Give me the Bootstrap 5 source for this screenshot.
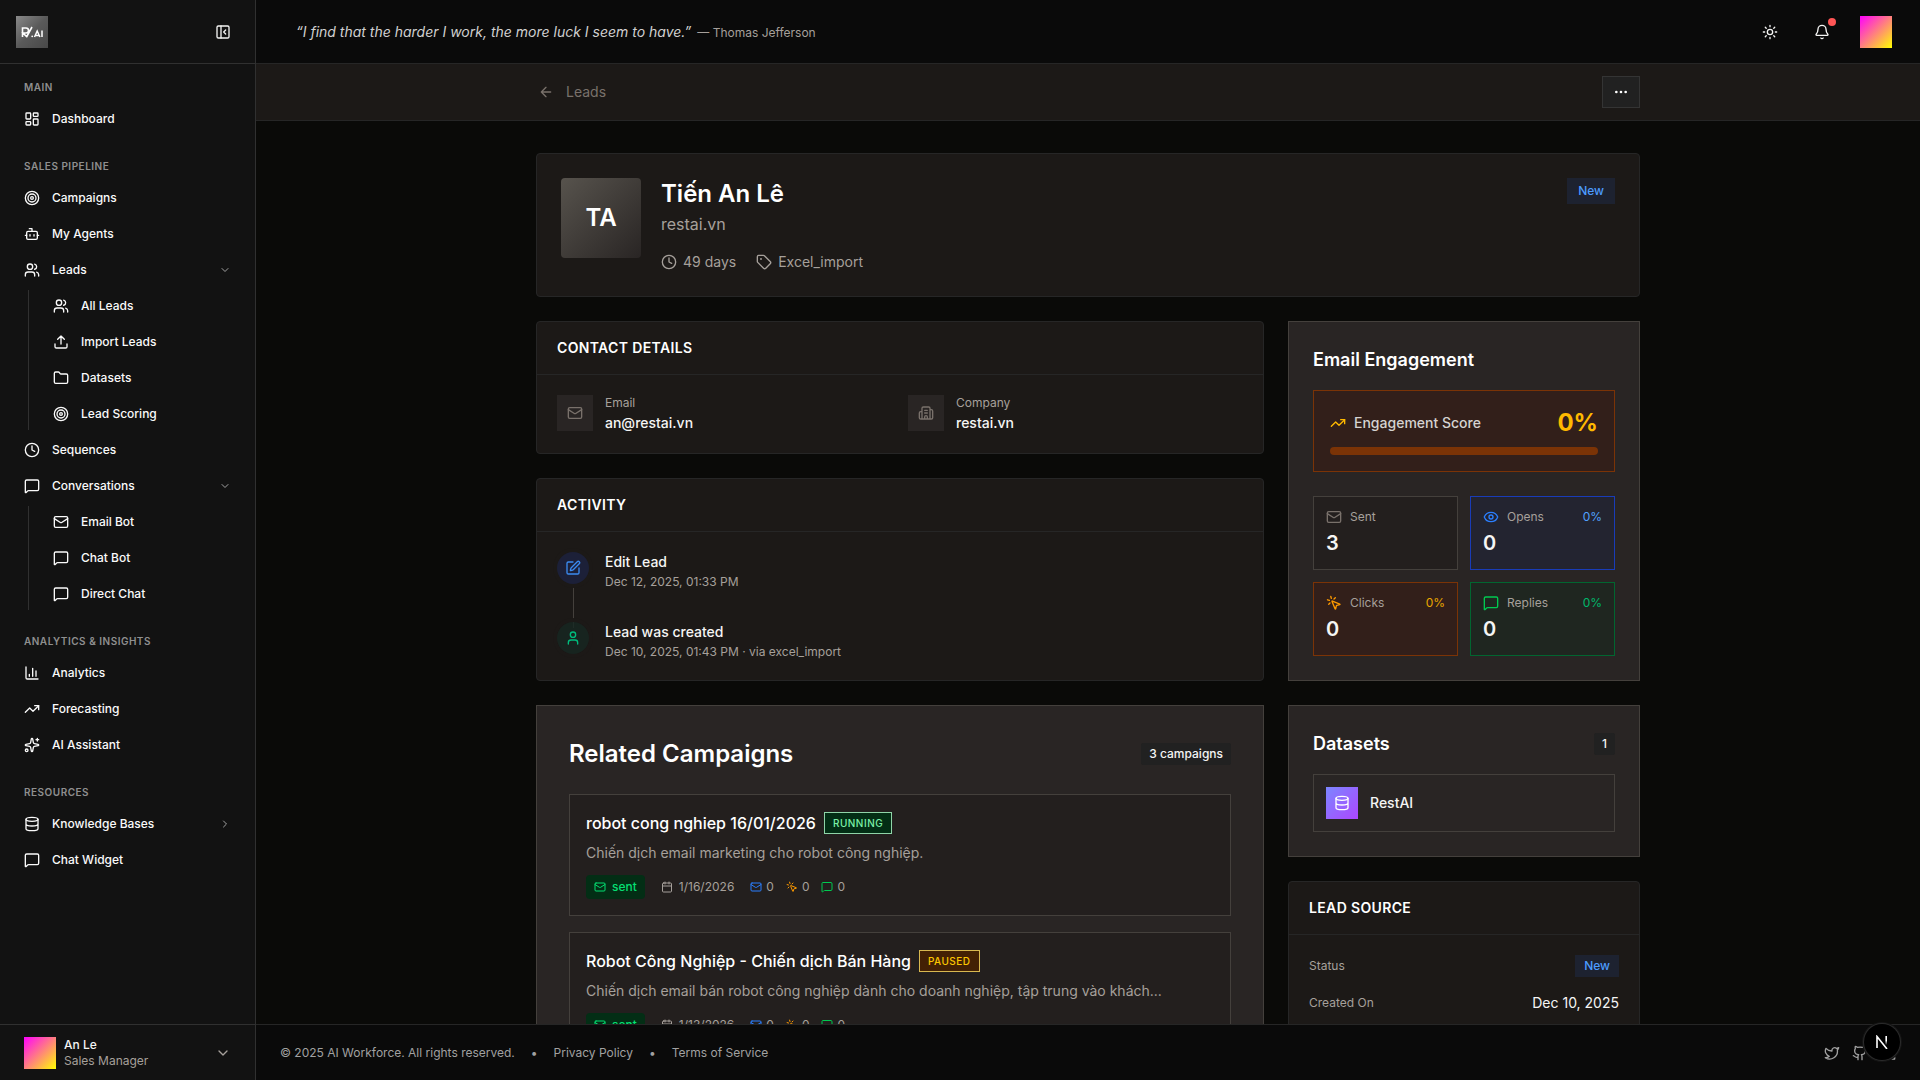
<!DOCTYPE html>
<html lang="en" data-bs-theme="dark">
<head>
<meta charset="utf-8">
<meta name="viewport" content="width=device-width, initial-scale=1">
<title>Tiến An Lê · Leads</title>
<link href="https://cdn.jsdelivr.net/npm/bootstrap@5.3.0/dist/css/bootstrap.min.css" rel="stylesheet">
<style>
:root{--edge:#262626;--s9:#1c1917;--s8:#292524;--s7:#44403c;--soft:#a6a09b;--dim:#79716b;--ink:#f5f5f4}
body{font-family:Inter,"Noto Sans",sans-serif;font-size:14px;line-height:20px;background:#0a0a08;color:var(--ink);height:100vh;overflow:hidden}
h1,h2,h3,p,ul,ol,dl,dd,dt{margin:0;padding:0}
ul,ol{list-style:none}
a{color:inherit;text-decoration:none}
button{background:none;border:0;color:inherit;padding:0;font:inherit}
.ico{width:16px;height:16px;flex:none;fill:none;stroke:currentColor;stroke-width:2;stroke-linecap:round;stroke-linejoin:round;display:block}
.ico-12{width:12px;height:12px}
.t12{font-size:12px;line-height:16px}
.t16{font-size:16px;line-height:24px}
.t18{font-size:18px;line-height:28px}
.t20{font-size:20px;line-height:28px}
.t24{font-size:24px;line-height:32px}
.med{font-weight:500}
.muted{color:var(--soft)}
.dim{color:var(--dim)}
.gap-2px{gap:2px}
.gap-6{gap:6px}
.gap-12{gap:12px}
.gap-20{gap:20px}
.grad{width:32px;height:32px;background:linear-gradient(135deg,#f0f,#ff0);flex:none}
/* sidebar */
.side{width:256px;flex:none;background:#121212;border-right:1px solid #303030}
.side-top{height:64px;flex:none;border-bottom:1px solid #303030;padding:0 24px 0 16px}
.brand{width:32px;height:32px;display:block}
.side-nav{padding:8px 16px;overflow:hidden}
.side-nav section+section{margin-top:16px}
.side-nav h2{font-size:10px;line-height:31px;font-weight:600;letter-spacing:.5px;color:#8f8f8f;padding-left:8px}
.side-list{display:flex;flex-direction:column;gap:4px}
.side-link{display:flex;align-items:center;gap:12px;width:100%;height:32px;padding:0 8px;font-size:12px;font-weight:500;color:#fafafa;text-align:left}
.side-link .end{margin-left:auto;color:#a1a1a1}
.side-sub{margin:4px 0 0 12px;border-left:1px solid #303030;padding-left:16px}
.side-foot{height:56px;flex:none;border-top:1px solid #303030;padding:0 24px;width:100%;text-align:left}
/* top bars */
.column{min-width:0}
.topbar{height:64px;flex:none;background:#0a0a0a;border-bottom:1px solid var(--edge);padding:0 28px 0 40px}
.quote{color:#d0d0d0}
.tool{width:36px;height:36px;display:flex;align-items:center;justify-content:center;position:relative}
.dot{position:absolute;width:8px;height:8px;border-radius:50%;background:#ff5555;top:4px;right:4px}
.crumbs{flex:none;background:var(--s9);border-bottom:1px solid var(--edge);padding:12px 0}
.wrap{max-width:1152px;margin:0 auto;padding-left:24px;padding-right:24px}
.back{padding-left:2px}
.more{width:38px;height:32px;background:#212121;border:1px solid #343434;color:#fff}
.more .ico{margin:auto}
/* content */
.scroll{overflow-y:auto;scrollbar-width:none;min-height:0}
.panel{background:var(--s9);border:1px solid var(--edge);border-radius:4px}
.panel-head{padding:16px 20px;border-bottom:1px solid var(--edge);font-size:14px;line-height:20px;font-weight:600;letter-spacing:.35px}
.panel-body{padding:20px}
.box{background:var(--s8);border:1px solid var(--s7)}
.face{width:80px;height:80px;border-radius:4px;background:linear-gradient(135deg,#57534d,#292524);font-size:24px;font-weight:600;color:#fff}
.cols{display:grid;grid-template-columns:repeat(3,minmax(0,1fr));gap:24px}
.span-2{grid-column:span 2}
.pair{display:grid;grid-template-columns:1fr 1fr}
.sq{width:36px;height:36px;background:var(--s8);flex:none}
.pill{background:#1d2230;color:#4c9cff;font-size:12px;line-height:16px;font-weight:500;padding:3px 9px}
.pill-lg{padding:5px 11px}
.tagbox{background:#212121;font-size:12px;line-height:16px;font-weight:500;padding:3px 8px;border-radius:2px}
.step{display:flex;gap:16px;position:relative}
.step+.step{margin-top:32px}
.step .bubble{width:32px;height:32px;border-radius:50%;box-shadow:0 0 0 4px var(--s9);flex:none;z-index:1}
.step:not(:last-child)::before{content:"";position:absolute;left:16px;top:32px;bottom:-38px;width:1px;background:var(--s7)}
.b-blue{background:#1c2038;color:#3b8bf0}
.b-green{background:#162722cc;color:#00bc7d}
.score{background:#321f1a;border:1px solid #7b3306;padding:16px}
.score label{color:#d6d3d1;font-weight:500}
.score progress{appearance:none;display:block;width:100%;height:8px;border:0;border-radius:4px;overflow:hidden;background:#7b3306}
.score progress::-webkit-progress-bar{background:#7b3306}
.score progress::-webkit-progress-value{background:#ffb900}
.amber{color:#ffb900}
.stat{padding:12px;border:1px solid var(--s7);background:#231f1e}
.stat.open{background:#232430;border-color:#193cb8}
.stat.click{background:#321f1a;border-color:#7b3306}
.stat.reply{background:#1f2620;border-color:#016630}
.c-blue{color:#2b7fff}.c-lblue{color:#51a2ff}.c-org{color:#fe9a00}.c-yel{color:#e9a800}.c-grn{color:#00c950}.c-em{color:#00b86b}
.camp{background:#231f1e;border:1px solid var(--s7);padding:16px}
.camp-meta{margin-top:12px}
.state{font-size:10px;line-height:14px;font-weight:500;padding:3px 8px;border:1px solid;letter-spacing:.5px}
.running{background:#032e15;border-color:#8fd4a8;color:#7bf1a8}
.paused{background:#432004;border-color:#d8b850;color:#fdc700}
.sent{background:#032e15;color:#05df72;border-radius:4px;padding:4px 8px;gap:6px;font-weight:500}
.data-row{padding:12px;border:1px solid var(--s7)}
.data-ico{width:32px;height:32px;background:linear-gradient(135deg,#7c86ff,#ad46ff);color:#fff}
.page-foot{height:56px;flex:none;border-top:1px solid var(--edge);background:#0a0a0a;padding:0 24px;color:#a1a1a1}
.badge-n{position:fixed;right:20px;bottom:20px;width:36px;height:36px;border-radius:50%;background:#000;box-shadow:0 0 0 1px #2b2b2b,0 0 0 2px #151515}
</style>
<script src="https://cdn.jsdelivr.net/npm/bootstrap@5.3.0/dist/js/bootstrap.bundle.min.js" defer></script>
</head>
<body class="d-flex">
<svg width="0" height="0" class="position-absolute" aria-hidden="true">
<symbol id="i-panel" viewBox="0 0 24 24"><rect width="18" height="18" x="3" y="3" rx="2"/><path d="M9 3v18M16 15l-3-3 3-3"/></symbol>
<symbol id="i-dash" viewBox="0 0 24 24"><rect width="7" height="9" x="3" y="3" rx="1"/><rect width="7" height="5" x="14" y="3" rx="1"/><rect width="7" height="9" x="14" y="12" rx="1"/><rect width="7" height="5" x="3" y="16" rx="1"/></symbol>
<symbol id="i-target" viewBox="0 0 24 24"><circle cx="12" cy="12" r="10"/><circle cx="12" cy="12" r="6"/><circle cx="12" cy="12" r="2"/></symbol>
<symbol id="i-bot" viewBox="0 0 24 24"><path d="M12 8V4H8"/><rect width="16" height="12" x="4" y="8" rx="2"/><path d="M2 14h2M20 14h2M15 13v2M9 13v2"/></symbol>
<symbol id="i-users" viewBox="0 0 24 24"><path d="M16 21v-2a4 4 0 0 0-4-4H6a4 4 0 0 0-4 4v2M16 3.128a4 4 0 0 1 0 7.744M22 21v-2a4 4 0 0 0-3-3.87"/><circle cx="9" cy="7" r="4"/></symbol>
<symbol id="i-user" viewBox="0 0 24 24"><path d="M19 21v-2a4 4 0 0 0-4-4H9a4 4 0 0 0-4 4v2"/><circle cx="12" cy="7" r="4"/></symbol>
<symbol id="i-upload" viewBox="0 0 24 24"><path d="M12 3v12M17 8l-5-5-5 5M21 15v4a2 2 0 0 1-2 2H5a2 2 0 0 1-2-2v-4"/></symbol>
<symbol id="i-folder" viewBox="0 0 24 24"><path d="M20 20a2 2 0 0 0 2-2V8a2 2 0 0 0-2-2h-7.9a2 2 0 0 1-1.69-.9L9.6 3.9A2 2 0 0 0 7.93 3H4a2 2 0 0 0-2 2v13a2 2 0 0 0 2 2Z"/></symbol>
<symbol id="i-clock" viewBox="0 0 24 24"><circle cx="12" cy="12" r="10"/><path d="M12 6v6l4 2"/></symbol>
<symbol id="i-msg" viewBox="0 0 24 24"><path d="M22 17a2 2 0 0 1-2 2H6.828a2 2 0 0 0-1.414.586l-2.202 2.202A.71.71 0 0 1 2 21.286V5a2 2 0 0 1 2-2h16a2 2 0 0 1 2 2z"/></symbol>
<symbol id="i-mail" viewBox="0 0 24 24"><path d="m22 7-8.991 5.727a2 2 0 0 1-2.009 0L2 7"/><rect x="2" y="4" width="20" height="16" rx="2"/></symbol>
<symbol id="i-chart" viewBox="0 0 24 24"><path d="M3 3v16a2 2 0 0 0 2 2h16M18 17V9M13 17V5M8 17v-3"/></symbol>
<symbol id="i-trend" viewBox="0 0 24 24"><path d="M16 7h6v6"/><path d="m22 7-8.5 8.5-5-5L2 17"/></symbol>
<symbol id="i-spark" viewBox="0 0 24 24"><path d="M11.017 2.814a1 1 0 0 1 1.966 0l1.051 5.558a2 2 0 0 0 1.594 1.594l5.558 1.051a1 1 0 0 1 0 1.966l-5.558 1.051a2 2 0 0 0-1.594 1.594l-1.051 5.558a1 1 0 0 1-1.966 0l-1.051-5.558a2 2 0 0 0-1.594-1.594l-5.558-1.051a1 1 0 0 1 0-1.966l5.558-1.051a2 2 0 0 0 1.594-1.594zM20 2v4M22 4h-4"/><circle cx="4" cy="20" r="2"/></symbol>
<symbol id="i-db" viewBox="0 0 24 24"><ellipse cx="12" cy="5" rx="9" ry="3"/><path d="M3 5V19A9 3 0 0 0 21 19V5M3 12A9 3 0 0 0 21 12"/></symbol>
<symbol id="i-down" viewBox="0 0 24 24"><path d="m6 9 6 6 6-6"/></symbol>
<symbol id="i-right" viewBox="0 0 24 24"><path d="m9 18 6-6-6-6"/></symbol>
<symbol id="i-left" viewBox="0 0 24 24"><path d="m12 19-7-7 7-7M19 12H5"/></symbol>
<symbol id="i-sun" viewBox="0 0 24 24"><circle cx="12" cy="12" r="4"/><path d="M12 2v2M12 20v2M4.93 4.93l1.41 1.41M17.66 17.66l1.41 1.41M2 12h2M20 12h2M6.34 17.66l-1.41 1.41M19.07 4.93l-1.41 1.41"/></symbol>
<symbol id="i-bell" viewBox="0 0 24 24"><path d="M10.268 21a2 2 0 0 0 3.464 0M3.262 15.326A1 1 0 0 0 4 17h16a1 1 0 0 0 .74-1.673C19.41 13.956 18 12.499 18 8A6 6 0 0 0 6 8c0 4.499-1.411 5.956-2.738 7.326"/></symbol>
<symbol id="i-dots" viewBox="0 0 24 24"><circle cx="12" cy="12" r="1"/><circle cx="19" cy="12" r="1"/><circle cx="5" cy="12" r="1"/></symbol>
<symbol id="i-tag" viewBox="0 0 24 24"><path d="M12.586 2.586A2 2 0 0 0 11.172 2H4a2 2 0 0 0-2 2v7.172a2 2 0 0 0 .586 1.414l8.704 8.704a2.426 2.426 0 0 0 3.42 0l6.58-6.58a2.426 2.426 0 0 0 0-3.42z"/><circle cx="7.5" cy="7.5" r=".5" fill="currentColor"/></symbol>
<symbol id="i-bldg" viewBox="0 0 24 24"><path d="M10 12h4M10 8h4M14 21v-3a2 2 0 0 0-4 0v3M6 10H4a2 2 0 0 0-2 2v7a2 2 0 0 0 2 2h16a2 2 0 0 0 2-2V9a2 2 0 0 0-2-2h-2M6 21V5a2 2 0 0 1 2-2h8a2 2 0 0 1 2 2v16"/></symbol>
<symbol id="i-pen" viewBox="0 0 24 24"><path d="M12 3H5a2 2 0 0 0-2 2v14a2 2 0 0 0 2 2h14a2 2 0 0 0 2-2v-7"/><path d="M18.375 2.625a1 1 0 0 1 3 3l-9.013 9.014a2 2 0 0 1-.853.505l-2.873.84a.5.5 0 0 1-.62-.62l.84-2.873a2 2 0 0 1 .506-.852z"/></symbol>
<symbol id="i-eye" viewBox="0 0 24 24"><path d="M2.062 12.348a1 1 0 0 1 0-.696 10.75 10.75 0 0 1 19.876 0 1 1 0 0 1 0 .696 10.75 10.75 0 0 1-19.876 0"/><circle cx="12" cy="12" r="3"/></symbol>
<symbol id="i-click" viewBox="0 0 24 24"><path d="M14 4.1 12 6M5.1 8l-2.9-.8M6 12l-1.9 2M7.2 2.2 8 5.1M9.037 9.69a.498.498 0 0 1 .653-.653l11 4.5a.5.5 0 0 1-.074.949l-4.349 1.041a1 1 0 0 0-.74.739l-1.04 4.35a.5.5 0 0 1-.95.074z"/></symbol>
<symbol id="i-cal" viewBox="0 0 24 24"><path d="M8 2v4M16 2v4M3 10h18"/><rect width="18" height="18" x="3" y="4" rx="2"/></symbol>
<symbol id="i-tw" viewBox="0 0 24 24"><path d="M22 4s-.7 2.1-2 3.4c1.6 10-9.4 17.3-18 11.6 2.2.1 4.4-.6 6-2C3 15.5.5 9.6 3 5c2.2 2.6 5.6 4.1 9 4-.9-4.2 4-6.6 7-3.8 1.1 0 3-1.2 3-1.2z"/></symbol>
<symbol id="i-gh" viewBox="0 0 24 24"><path d="M15 22v-4a4.800 4.800 0 0 0-1-3.500c3 0 6-2 6-5.500.08-1.250-.27-2.480-1-3.500.28-1.150.28-2.350 0-3.500 0 0-1 0-3 1.500-2.640-.5-5.360-.5-8 0C6 2 5 2 5 2c-.3 1.150-.3 2.350 0 3.500A5.403 5.403 0 0 0 4 9c0 3.500 3 5.500 6 5.500-.39.490-.68 1.050-.85 1.650-.17.6-.22 1.230-.15 1.850v4M9 18c-4.510 2-5-2-7-2"/></symbol>
<symbol id="i-li" viewBox="0 0 24 24"><path d="M16 8a6 6 0 0 1 6 6v7h-4v-7a2 2 0 0 0-4 0v7h-4v-7a6 6 0 0 1 6-6z"/><rect width="4" height="12" x="2" y="9"/><circle cx="4" cy="4" r="2"/></symbol>
</svg>

<aside class="side d-flex flex-column vh-100">
  <div class="side-top d-flex align-items-center justify-content-between">
    <a href="#" aria-label="RestAI home"><svg class="brand" viewBox="0 0 32 32"><defs><linearGradient id="bg" x1="0" y1="0" x2="1" y2="1"><stop stop-color="#8a8a8a"/><stop offset=".5" stop-color="#5a5a5a"/><stop offset="1" stop-color="#484848"/></linearGradient></defs><rect width="32" height="32" fill="url(#bg)"/><g fill="none" stroke="#fff" stroke-width="1.600"><path d="M6.500 21v-9h3.500a2.500 2.500 0 0 1 0 5H7l4 4M10.500 21 16 11"/></g><circle cx="16.200" cy="20.300" r=".9" fill="#fff"/><path d="m18.500 21 2.700-6 2.700 6M19.500 19.500h3.500M26 14.500V21" fill="none" stroke="#fff" stroke-width="1.500"/></svg></a>
    <button type="button" aria-label="Collapse sidebar"><svg class="ico"><use href="#i-panel"/></svg></button>
  </div>
  <nav class="side-nav flex-grow-1">
    <section><h2>MAIN</h2>
      <ul class="side-list"><li><a class="side-link" href="#"><svg class="ico"><use href="#i-dash"/></svg>Dashboard</a></li></ul>
    </section>
    <section><h2>SALES PIPELINE</h2>
      <ul class="side-list">
        <li><a class="side-link" href="#"><svg class="ico"><use href="#i-target"/></svg>Campaigns</a></li>
        <li><a class="side-link" href="#"><svg class="ico"><use href="#i-bot"/></svg>My Agents</a></li>
        <li><button type="button" class="side-link"><svg class="ico"><use href="#i-users"/></svg>Leads<svg class="ico ico-12 end"><use href="#i-down"/></svg></button>
          <ul class="side-list side-sub">
            <li><a class="side-link" href="#"><svg class="ico"><use href="#i-users"/></svg>All Leads</a></li>
            <li><a class="side-link" href="#"><svg class="ico"><use href="#i-upload"/></svg>Import Leads</a></li>
            <li><a class="side-link" href="#"><svg class="ico"><use href="#i-folder"/></svg>Datasets</a></li>
            <li><a class="side-link" href="#"><svg class="ico"><use href="#i-target"/></svg>Lead Scoring</a></li>
          </ul></li>
        <li><a class="side-link" href="#"><svg class="ico"><use href="#i-clock"/></svg>Sequences</a></li>
        <li><button type="button" class="side-link"><svg class="ico"><use href="#i-msg"/></svg>Conversations<svg class="ico ico-12 end"><use href="#i-down"/></svg></button>
          <ul class="side-list side-sub">
            <li><a class="side-link" href="#"><svg class="ico"><use href="#i-mail"/></svg>Email Bot</a></li>
            <li><a class="side-link" href="#"><svg class="ico"><use href="#i-msg"/></svg>Chat Bot</a></li>
            <li><a class="side-link" href="#"><svg class="ico"><use href="#i-msg"/></svg>Direct Chat</a></li>
          </ul></li>
      </ul>
    </section>
    <section><h2>ANALYTICS &amp; INSIGHTS</h2>
      <ul class="side-list">
        <li><a class="side-link" href="#"><svg class="ico"><use href="#i-chart"/></svg>Analytics</a></li>
        <li><a class="side-link" href="#"><svg class="ico"><use href="#i-trend"/></svg>Forecasting</a></li>
        <li><a class="side-link" href="#"><svg class="ico"><use href="#i-spark"/></svg>AI Assistant</a></li>
      </ul>
    </section>
    <section><h2>RESOURCES</h2>
      <ul class="side-list">
        <li><button type="button" class="side-link"><svg class="ico"><use href="#i-db"/></svg>Knowledge Bases<svg class="ico ico-12 end"><use href="#i-right"/></svg></button></li>
        <li><a class="side-link" href="#"><svg class="ico"><use href="#i-msg"/></svg>Chat Widget</a></li>
      </ul>
    </section>
  </nav>
  <button type="button" class="side-foot d-flex align-items-center gap-2 t12">
    <span class="grad"></span>
    <span class="flex-grow-1"><span class="d-block med">An Le</span><span class="d-block muted">Sales Manager</span></span>
    <svg class="ico muted"><use href="#i-down"/></svg>
  </button>
</aside>

<div class="column flex-grow-1 d-flex flex-column vh-100">
  <header class="topbar d-flex align-items-center justify-content-between">
    <p class="d-flex align-items-baseline gap-6"><em class="quote">“I find that the harder I work, the more luck I seem to have.”</em><span class="t12 muted">— Thomas Jefferson</span></p>
    <div class="d-flex align-items-center gap-3">
      <button type="button" class="tool" aria-label="Theme"><svg class="ico"><use href="#i-sun"/></svg></button>
      <button type="button" class="tool" aria-label="Notifications"><svg class="ico"><use href="#i-bell"/></svg><span class="dot"></span></button>
      <button type="button" class="grad ms-1" aria-label="Account"></button>
    </div>
  </header>
  <div class="crumbs">
    <div class="wrap d-flex align-items-center justify-content-between">
      <a href="#" class="back d-flex align-items-center gap-12 dim"><svg class="ico"><use href="#i-left"/></svg>Leads</a>
      <button type="button" class="more" aria-label="More actions"><svg class="ico"><use href="#i-dots"/></svg></button>
    </div>
  </div>
  <main class="scroll flex-grow-1">
    <div class="wrap d-flex flex-column gap-4 my-4 py-2">
      <section class="panel p-4 d-flex align-items-start gap-20">
        <div class="face d-flex align-items-center justify-content-center">TA</div>
        <div class="flex-grow-1">
          <div class="d-flex flex-column gap-2px">
            <h1 class="t24 fw-semibold">Tiến An Lê</h1>
            <p class="t16 muted">restai.vn</p>
          </div>
          <div class="d-flex muted mt-3 gap-20">
            <span class="d-flex align-items-center gap-6"><svg class="ico"><use href="#i-clock"/></svg>49 days</span>
            <span class="d-flex align-items-center gap-6"><svg class="ico"><use href="#i-tag"/></svg>Excel_import</span>
          </div>
        </div>
        <span class="pill pill-lg">New</span>
      </section>

      <div class="cols">
        <div class="span-2 d-flex flex-column gap-4">
          <section class="panel">
            <h2 class="panel-head">CONTACT DETAILS</h2>
            <div class="panel-body pair gap-3">
              <div class="d-flex gap-12"><span class="sq d-flex align-items-center justify-content-center dim"><svg class="ico"><use href="#i-mail"/></svg></span>
                <dl class="d-flex flex-column gap-2px"><dt class="t12 muted fw-normal">Email</dt><dd class="med">an@restai.vn</dd></dl></div>
              <div class="d-flex gap-12"><span class="sq d-flex align-items-center justify-content-center dim"><svg class="ico"><use href="#i-bldg"/></svg></span>
                <dl class="d-flex flex-column gap-2px"><dt class="t12 muted fw-normal">Company</dt><dd class="med">restai.vn</dd></dl></div>
            </div>
          </section>
          <section class="panel">
            <h2 class="panel-head">ACTIVITY</h2>
            <ol class="panel-body">
              <li class="step"><span class="bubble b-blue d-flex align-items-center justify-content-center"><svg class="ico"><use href="#i-pen"/></svg></span>
                <div class="d-flex flex-column gap-2px"><strong class="med">Edit Lead</strong><span class="t12 muted">Dec 12, 2025, 01:33 PM</span></div></li>
              <li class="step"><span class="bubble b-green d-flex align-items-center justify-content-center"><svg class="ico"><use href="#i-user"/></svg></span>
                <div class="d-flex flex-column gap-2px"><strong class="med">Lead was created</strong><span class="t12 muted">Dec 10, 2025, 01:43 PM · via excel_import</span></div></li>
            </ol>
          </section>
        </div>
        <section class="box p-4">
          <h2 class="t18 fw-semibold mb-3">Email Engagement</h2>
          <div class="score mb-4">
            <div class="d-flex align-items-center gap-2 mb-2"><svg class="ico amber"><use href="#i-trend"/></svg><label for="eng" class="flex-grow-1">Engagement Score</label><span class="t24 fw-bold amber">0%</span></div>
            <progress id="eng" value="0" max="100"></progress>
          </div>
          <div class="pair gap-12">
            <div class="stat"><div class="t12 d-flex align-items-center gap-2 muted mb-1"><svg class="ico dim"><use href="#i-mail"/></svg>Sent</div><div class="t20 fw-semibold">3</div></div>
            <div class="stat open"><div class="t12 d-flex align-items-center gap-2 muted mb-1"><svg class="ico c-blue"><use href="#i-eye"/></svg>Opens<span class="ms-auto c-lblue">0%</span></div><div class="t20 fw-semibold">0</div></div>
            <div class="stat click"><div class="t12 d-flex align-items-center gap-2 muted mb-1"><svg class="ico c-org"><use href="#i-click"/></svg>Clicks<span class="ms-auto c-yel">0%</span></div><div class="t20 fw-semibold">0</div></div>
            <div class="stat reply"><div class="t12 d-flex align-items-center gap-2 muted mb-1"><svg class="ico c-grn"><use href="#i-msg"/></svg>Replies<span class="ms-auto c-em">0%</span></div><div class="t20 fw-semibold">0</div></div>
          </div>
        </section>

        <section class="box span-2 p-4">
          <div class="p-2">
          <div class="d-flex align-items-center justify-content-between mb-4"><h2 class="t24 fw-semibold">Related Campaigns</h2><span class="tagbox">3 campaigns</span></div>
          <div class="d-flex flex-column gap-3">
            <article class="camp">
              <div class="d-flex align-items-center gap-2 mb-2"><h3 class="t16 med">robot cong nghiep 16/01/2026</h3><span class="state running">RUNNING</span></div>
              <p class="muted text-truncate">Chiến dịch email marketing cho robot công nghiệp.</p>
              <div class="camp-meta d-flex align-items-center gap-3 t12 muted">
                <span class="sent d-flex align-items-center"><svg class="ico ico-12"><use href="#i-mail"/></svg>sent</span>
                <span class="d-flex align-items-center gap-6"><svg class="ico ico-12"><use href="#i-cal"/></svg>1/16/2026</span>
                <span class="d-flex gap-12"><span class="d-flex align-items-center gap-1"><svg class="ico ico-12 c-blue"><use href="#i-mail"/></svg>0</span><span class="d-flex align-items-center gap-1"><svg class="ico ico-12 c-org"><use href="#i-click"/></svg>0</span><span class="d-flex align-items-center gap-1"><svg class="ico ico-12 c-grn"><use href="#i-msg"/></svg>0</span></span>
              </div>
            </article>
            <article class="camp">
              <div class="d-flex align-items-center gap-2 mb-2"><h3 class="t16 med">Robot Công Nghiệp - Chiến dịch Bán Hàng</h3><span class="state paused">PAUSED</span></div>
              <p class="muted text-truncate">Chiến dịch email bán robot công nghiệp dành cho doanh nghiệp, tập trung vào khách...</p>
              <div class="camp-meta d-flex align-items-center gap-3 t12 muted">
                <span class="sent d-flex align-items-center"><svg class="ico ico-12"><use href="#i-mail"/></svg>sent</span>
                <span class="d-flex align-items-center gap-6"><svg class="ico ico-12"><use href="#i-cal"/></svg>1/13/2026</span>
                <span class="d-flex gap-12"><span class="d-flex align-items-center gap-1"><svg class="ico ico-12 c-blue"><use href="#i-mail"/></svg>0</span><span class="d-flex align-items-center gap-1"><svg class="ico ico-12 c-org"><use href="#i-click"/></svg>0</span><span class="d-flex align-items-center gap-1"><svg class="ico ico-12 c-grn"><use href="#i-msg"/></svg>0</span></span>
              </div>
            </article>
          </div>
          </div>
        </section>
        <div class="d-flex flex-column gap-4">
          <section class="box p-4">
            <div class="d-flex align-items-center justify-content-between mb-3"><h2 class="t18 fw-semibold">Datasets</h2><span class="tagbox">1</span></div>
            <a href="#" class="data-row d-flex align-items-center gap-12"><span class="data-ico d-flex align-items-center justify-content-center"><svg class="ico"><use href="#i-db"/></svg></span><span class="med">RestAI</span></a>
          </section>
          <section class="panel">
            <h2 class="panel-head">LEAD SOURCE</h2>
            <dl class="panel-body d-flex flex-column gap-3">
              <div class="d-flex align-items-center justify-content-between"><dt class="t12 muted fw-normal">Status</dt><dd class="pill">New</dd></div>
              <div class="d-flex align-items-center justify-content-between"><dt class="t12 muted fw-normal">Created On</dt><dd>Dec 10, 2025</dd></div>
              <div class="d-flex align-items-center justify-content-between"><dt class="t12 muted fw-normal">Source</dt><dd>Excel_import</dd></div>
            </dl>
          </section>
        </div>
      </div>
    </div>
  </main>
  <footer class="page-foot d-flex align-items-center justify-content-between t12">
    <div class="d-flex gap-3"><span>© 2025 AI Workforce. All rights reserved.</span><span>•</span><a href="#">Privacy Policy</a><span>•</span><a href="#">Terms of Service</a></div>
    <div class="d-flex gap-12"><a href="#" aria-label="Twitter"><svg class="ico"><use href="#i-tw"/></svg></a><a href="#" aria-label="GitHub"><svg class="ico"><use href="#i-gh"/></svg></a><a href="#" aria-label="LinkedIn"><svg class="ico"><use href="#i-li"/></svg></a></div>
  </footer>
</div>
<button type="button" class="badge-n d-flex align-items-center justify-content-center" aria-label="Dev tools"><svg width="14" height="14" viewBox="0 0 14 14" fill="none" stroke-width="1.600"><defs><linearGradient id="nf" x1="0" y1="0" x2="0" y2="1"><stop offset=".5" stop-color="#fff"/><stop offset="1" stop-color="#fff" stop-opacity="0"/></linearGradient></defs><path d="M2 13V1.500L12 14" stroke="#fff"/><path d="M10.400 1h1.600v9h-1.600z" fill="url(#nf)"/></svg></button>
</body>
</html>
